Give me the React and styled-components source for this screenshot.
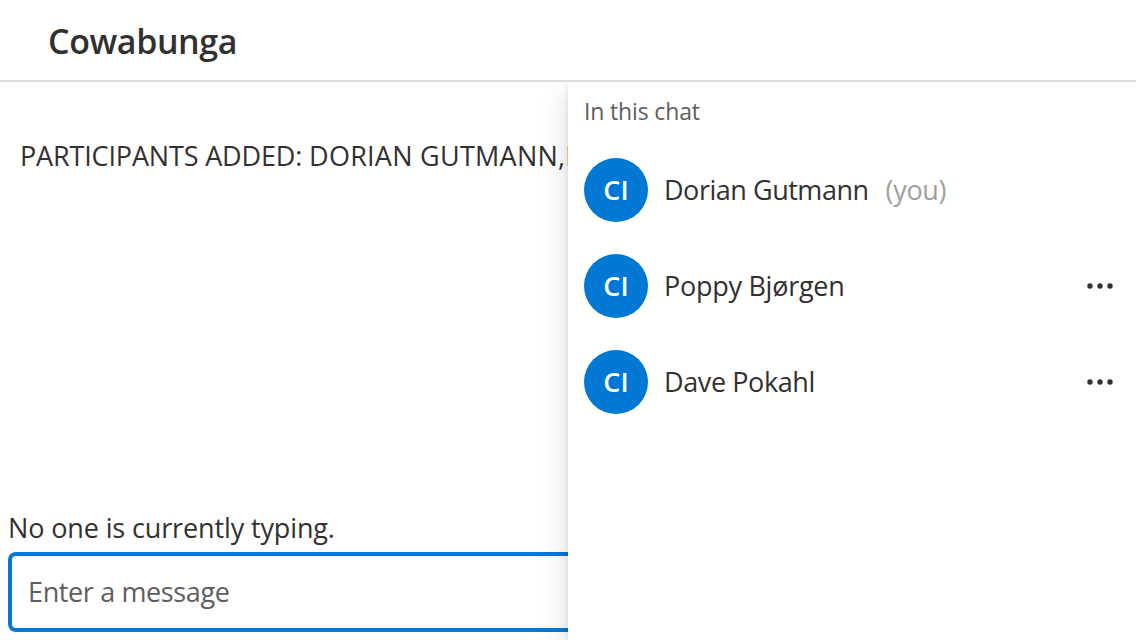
import React from 'react';
import styled, { createGlobalStyle } from 'styled-components';

const GlobalStyle = createGlobalStyle`
  * { box-sizing: border-box; }
  body {
    margin: 0;
    background: #fff;
    color: #323130;
    font-family: "Segoe UI", "Open Sans", sans-serif;
    font-size: 27px;
    overflow: hidden;
  }
`;

const Page = styled.div`
  display: flex;
  flex-direction: column;
  height: 640px;
  width: 1136px;
  overflow: hidden;
`;

const Header = styled.header`
  flex: none;
  display: flex;
  align-items: center;
  height: 82px;
  padding: 2px 48px 0;
  border-bottom: 2px solid #dcdcdc;
`;

const Title = styled.h1`
  margin: 0;
  font-size: 34px;
  line-height: 48px;
  font-weight: 600;
  letter-spacing: -0.4px;
`;

const Body = styled.div`
  flex: 1;
  display: flex;
  min-height: 0;
  overflow: hidden;
`;

const Chat = styled.main`
  flex: none;
  width: 568px;
  display: flex;
  flex-direction: column;
  padding: 55px 0 8px 8px;
  overflow: hidden;
`;

const Text = styled.span`
  line-height: ${(p) => p.$line || 38}px;
  letter-spacing: ${(p) => p.$tracking || 0}px;
  white-space: pre;
`;

const SystemMessage = styled.div`
  flex: 1;
  display: flex;
  align-items: flex-start;
  padding-left: 12px;
`;

const Typing = styled.div`
  display: flex;
  height: 43px;
`;

const MessageBox = styled.div`
  display: flex;
  align-items: center;
  height: 80px;
  padding-left: 16px;
  border: 4px solid #0078d4;
  border-right: 0;
  border-radius: 8px 0 0 8px;
  color: #605e5c;
`;

const Panel = styled.aside`
  flex: 1;
  padding: 12px 16px;
  background: #fff;
  box-shadow: 0 12.8px 28.8px rgba(0, 0, 0, 0.132), 0 2.4px 7.2px rgba(0, 0, 0, 0.108);
`;

const PanelHeading = styled.div`
  display: flex;
  height: 48px;
  font-size: 23px;
  color: #605e5c;
`;

const Person = styled.div`
  display: flex;
  align-items: center;
  height: 96px;
`;

const Avatar = styled.div`
  flex: none;
  display: flex;
  align-items: center;
  justify-content: center;
  width: 64px;
  height: 64px;
  margin-right: 16px;
  border-radius: 50%;
  background: #0078d4;
  color: #fff;
  font-weight: 600;
`;

const You = styled(Text)`
  margin-left: 17px;
  color: #a19f9d;
`;

const More = styled.svg`
  margin-left: auto;
  margin-right: 4px;
  width: 32px;
  height: 32px;
  fill: #323130;
`;

const people = [
  { name: 'Dorian Gutmann', you: true, tracking: -0.47 },
  { name: 'Poppy Bjørgen', tracking: -0.27 },
  { name: 'Dave Pokahl', tracking: -0.4 },
];

export default function App() {
  return (
    <Page>
      <GlobalStyle />
      <Header><Title>Cowabunga</Title></Header>
      <Body>
        <Chat>
          <SystemMessage>
            <Text $tracking={-0.16}>{'PARTICIPANTS ADDED: '}</Text>
            <Text $tracking={0.26}>DORIAN GUTMANN,P</Text>
          </SystemMessage>
          <Typing><Text $tracking={-0.13}>No one is currently typing.</Text></Typing>
          <MessageBox><Text $tracking={-0.37}>Enter a message</Text></MessageBox>
        </Chat>
        <Panel>
          <PanelHeading><Text $line={35} $tracking={-0.15}>In this chat</Text></PanelHeading>
          {people.map((p) => (
            <Person key={p.name}>
              <Avatar><Text>CI</Text></Avatar>
              <Text $tracking={p.tracking}>{p.name}</Text>
              {p.you ? <You $tracking={-0.36}>(you)</You> : (
                <More viewBox="0 0 32 32">
                  <circle cx="6" cy="16" r="2.7" />
                  <circle cx="16" cy="16" r="2.7" />
                  <circle cx="26" cy="16" r="2.7" />
                </More>
              )}
            </Person>
          ))}
        </Panel>
      </Body>
    </Page>
  );
}
